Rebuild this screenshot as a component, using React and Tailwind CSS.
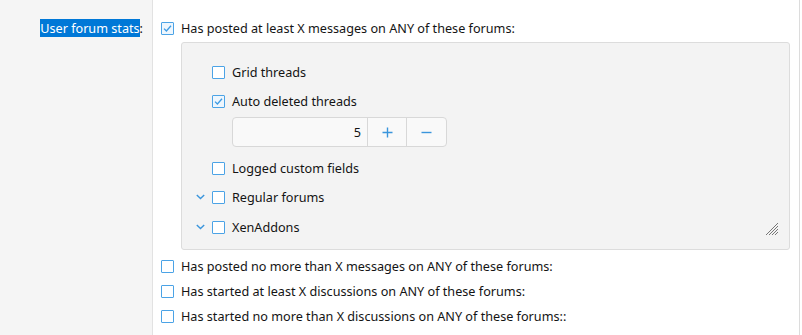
import React from 'react';

const FONT = { fontFamily: '"Noto Sans", "Open Sans", sans-serif' };

function Box({ checked }) {
  return (
    <span className={`w-[13px] h-[13px] shrink-0 border border-[#4ba3e6] rounded-[1px] flex items-center justify-center ${checked ? 'bg-[#eef6fd]' : 'bg-white'}`}>
      {checked && (
        <svg width="9" height="9" viewBox="0 0 9 9" fill="none">
          <path d="M1 4.6 L3.4 7 L8 1.8" stroke="#3d9be3" strokeWidth="1.3" />
        </svg>
      )}
    </span>
  );
}

function Chevron() {
  return (
    <svg width="9" height="6" viewBox="0 0 9 6" fill="none">
      <path d="M0.8 1 L4.5 4.6 L8.2 1" stroke="#3a95dc" strokeWidth="1.4" />
    </svg>
  );
}

// one checkbox line, optional expander slot on the left
function Row({ label, checked, chevron, slot }) {
  return (
    <div className="flex items-center h-[18px]">
      {slot && <span className="w-[16px] flex items-center">{chevron && <Chevron />}</span>}
      <Box checked={checked} />
      <span className="ml-[7px] whitespace-nowrap">{label}</span>
    </div>
  );
}

export default function App() {
  return (
    <div className="w-[802px] h-[335px] flex bg-white text-[12.65px] leading-[18px] text-[#141414] overflow-hidden" style={FONT}>
      <div className="w-[153px] shrink-0 bg-[#f5f5f5] border-r border-[#e2e2e2] pt-[19px] pr-[9px] text-right">
        <span className="bg-[#0078d7] text-white">User forum stats</span>:
      </div>

      <div className="flex-1 border-r border-[#dcdcdc] mr-[2px] pl-[8px] pr-[9px] pt-[19px]">
        <Row label="Has posted at least X messages on ANY of these forums:" checked />

        <div className="relative ml-[20px] mt-[5px] bg-[#f3f3f3] border border-[#dcdcdc] rounded-[3px] pl-[14px] pt-[20px] pb-[13px] flex flex-col">
          <Row slot label="Grid threads" />
          <div className="mt-[11px]"><Row slot label="Auto deleted threads" checked /></div>

          <div className="ml-[36px] mt-[7px] w-[215px] h-[30px] flex border border-[#d8d8d8] rounded-[4px] bg-[#f9f9f9]">
            <div className="w-[134px] flex items-center justify-end pr-[6px]">5</div>
            <div className="w-[39px] flex items-center justify-center border-l border-[#d8d8d8]">
              <svg width="11" height="11" viewBox="0 0 11 11"><path d="M5.5 0.5 V10.5 M0.5 5.5 H10.5" stroke="#3a95dc" strokeWidth="1.4" /></svg>
            </div>
            <div className="flex-1 flex items-center justify-center border-l border-[#d8d8d8]">
              <svg width="11" height="11" viewBox="0 0 11 11"><path d="M0.5 5.5 H10.5" stroke="#3a95dc" strokeWidth="1.4" /></svg>
            </div>
          </div>

          <div className="mt-[12px]"><Row slot label="Logged custom fields" /></div>
          <div className="mt-[11px]"><Row slot chevron label="Regular forums" /></div>
          <div className="mt-[12px]"><Row slot chevron label="XenAddons" /></div>

          <svg className="absolute right-[10px] bottom-[13px]" width="14" height="14" viewBox="0 0 14 14" fill="none">
            <path d="M1 13 L13 1 M4 13 L13 4 M7 13 L13 7 M10 13 L13 10" stroke="#777" strokeWidth="1" />
          </svg>
        </div>

        <div className="mt-[7px] flex flex-col gap-[7px]">
          <Row label="Has posted no more than X messages on ANY of these forums:" />
          <Row label="Has started at least X discussions on ANY of these forums:" />
          <Row label="Has started no more than X discussions on ANY of these forums::" />
        </div>
      </div>
    </div>
  );
}
